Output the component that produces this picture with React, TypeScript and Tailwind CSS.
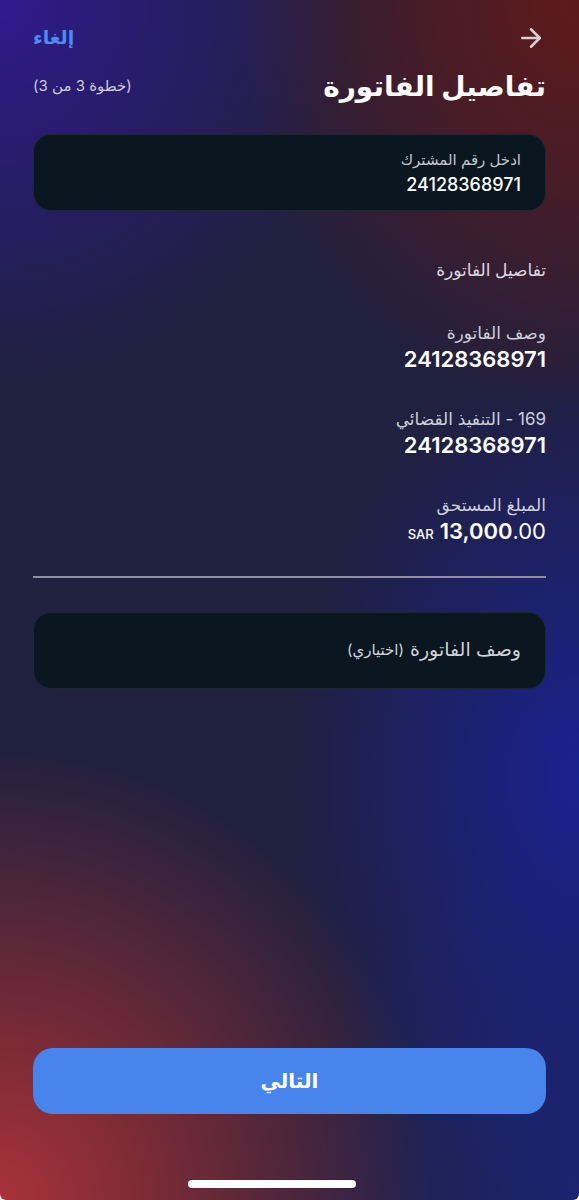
import { ArrowRight } from "lucide-react";

const details = [
  { label: "وصف الفاتورة", value: "24128368971" },
  { label: "169 - التنفيذ القضائي", value: "24128368971" },
];

const App = () => {
  return (
    <div
      dir="rtl"
      className="relative h-[1200px] w-full overflow-hidden rounded-b-[6px] bg-[#20203f] bg-[radial-gradient(ellipse_60%_32%_at_0%_0%,#2f1a8c_0%,transparent_100%),radial-gradient(ellipse_60%_35%_at_100%_0%,#5e1a1a_0%,#4a1c26_40%,transparent_100%),radial-gradient(ellipse_75%_38%_at_0%_100%,#a8323a_0%,#7a2b36_35%,transparent_100%),radial-gradient(ellipse_50%_35%_at_100%_65%,#1a2290_0%,transparent_100%),radial-gradient(ellipse_50%_30%_at_100%_100%,#1c2470_0%,transparent_100%)] font-['Inter','DejaVu_Sans',sans-serif] text-white"
    >
      <div className="flex h-full flex-col px-[33px]">
        <div className="flex items-center justify-between pt-[23px]">
          <ArrowRight className="h-[30px] w-[30px] text-[#d8d0d4]" strokeWidth={2} />
          <button className="text-[19px] font-semibold leading-[30px] text-[#4b8bf2]">إلغاء</button>
        </div>

        <div className="mt-[13px] flex items-center justify-between">
          <h1 className="text-[28px] font-bold leading-[40px]">تفاصيل الفاتورة</h1>
          <span className="text-[15px] text-[#cfcdd8]">(خطوة 3 من 3)</span>
        </div>

        <div className="mt-[28px] flex h-[77px] flex-col justify-center gap-[4px] rounded-[18px] border border-[#1d2833] bg-[#0a1620] px-[24px]">
          <span className="text-[15px] leading-[20px] text-[#c3c6cc]">ادخل رقم المشترك</span>
          <span className="text-[18px] font-medium leading-[22px] text-white">24128368971</span>
        </div>

        <h2 className="mt-[47px] text-[17px] font-medium leading-[24px] text-[#dcdae2]">تفاصيل الفاتورة</h2>

        <div className="mt-[39px] flex flex-col gap-[34px]">
          {details.map((d) => (
            <div key={d.label} className="flex flex-col">
              <span className="text-[17px] leading-[24px] text-[#cfd0d8]">{d.label}</span>
              <span className="text-[22px] font-semibold leading-[28px]">{d.value}</span>
            </div>
          ))}
          <div className="flex flex-col">
            <span className="text-[17px] leading-[24px] text-[#cfd0d8]">المبلغ المستحق</span>
            <span dir="ltr" className="flex h-[28px] items-baseline justify-end gap-[6px] leading-[28px]">
              <span className="text-[13px] font-medium">SAR</span>
              <span className="text-[22px]">
                <span className="font-semibold">13,000</span>.00
              </span>
            </span>
          </div>
        </div>

        <div className="mt-[31px] h-[2px] bg-[#8e8ea4]" />

        <div className="mt-[34px] flex h-[77px] items-center rounded-[18px] border border-[#1d2833] bg-[#0a1620] px-[24px] text-[#d2d2da]">
          <span className="text-[19px]">وصف الفاتورة</span>
          <span className="mr-[6px] text-[15px]">(اختياري)</span>
        </div>

        <div className="flex-1" />

        <button className="flex h-[66px] items-center justify-center rounded-[20px] bg-[#4785ec] text-[20px] font-bold text-white">
          التالي
        </button>

        <div className="flex justify-center pb-[12px] pr-[36px] pt-[66px]">
          <div className="h-[8px] w-[168px] rounded-full bg-white" />
        </div>
      </div>
    </div>
  );
};

export default App;
